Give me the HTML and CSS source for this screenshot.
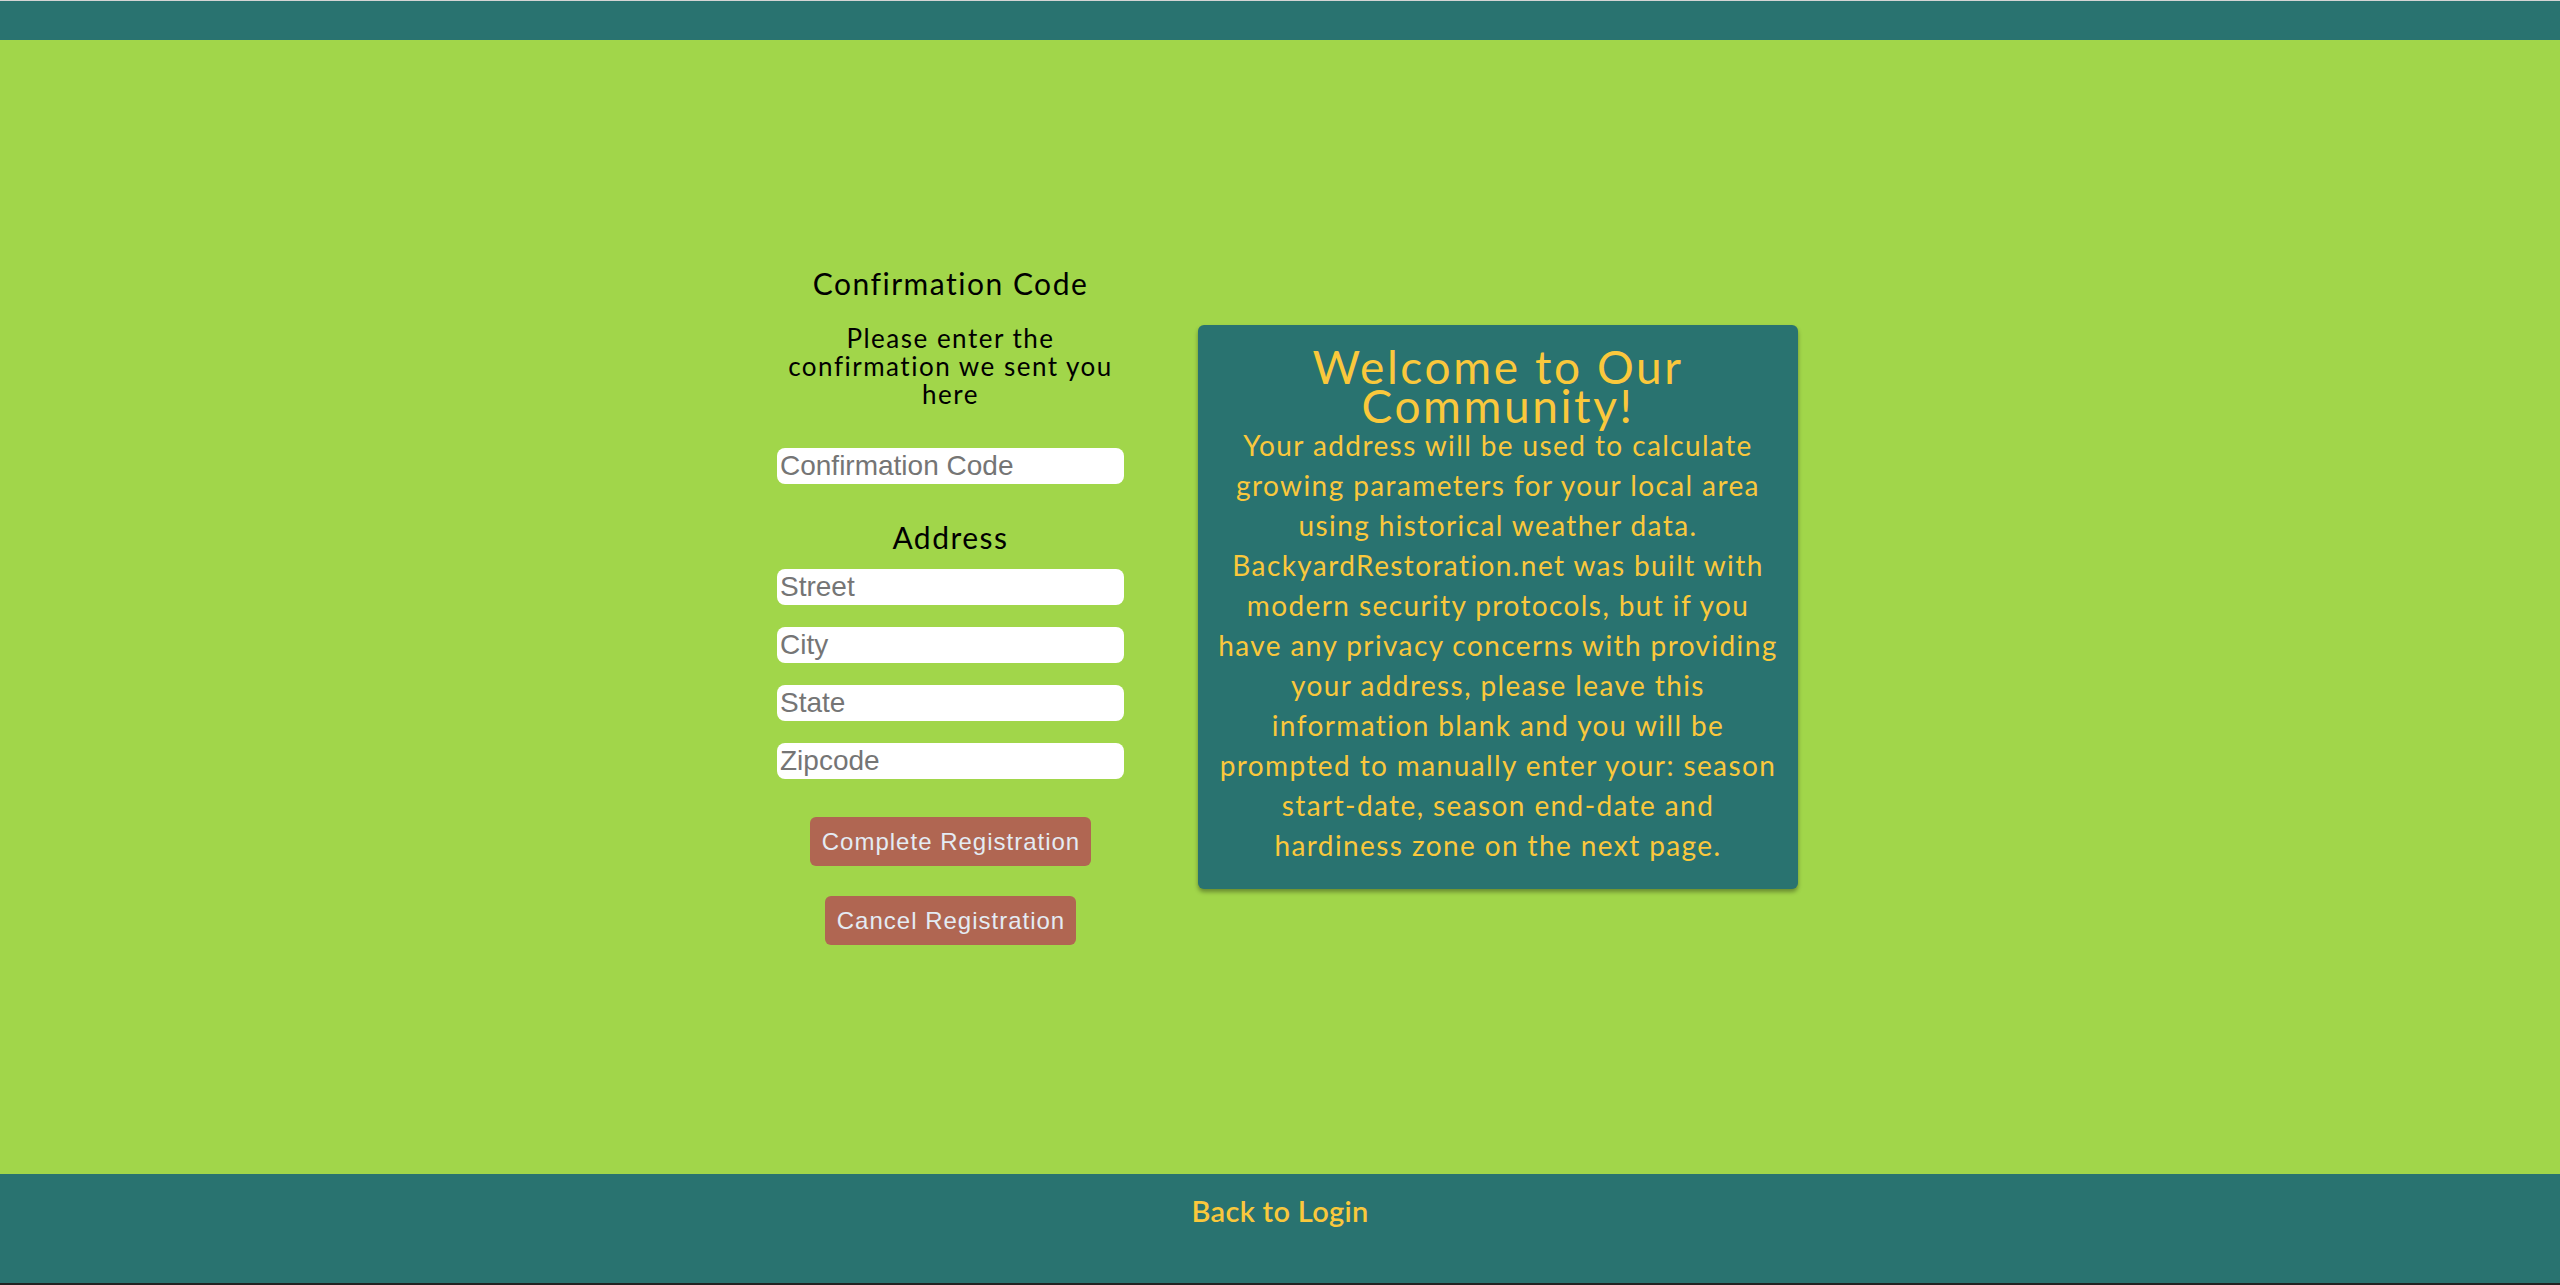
FILE: index.html
```html
<!DOCTYPE html>
<html lang="en">
<head>
<meta charset="utf-8">
<title>Registration - Backyard Restoration</title>
<link rel="stylesheet" href="styles.css">
</head>
<body>
<header class="topbar"></header>
<main class="main">
  <div class="layout">
    <form class="form-col">
      <h2 class="form-heading">Confirmation Code</h2>
      <p class="form-note">Please enter the confirmation we sent you here</p>
      <input class="field field-code" type="text" placeholder="Confirmation Code">
      <h2 class="form-heading address-heading">Address</h2>
      <div class="address-fields">
        <input class="field" type="text" placeholder="Street">
        <input class="field" type="text" placeholder="City">
        <input class="field" type="text" placeholder="State">
        <input class="field" type="text" placeholder="Zipcode">
      </div>
      <div class="actions">
        <button class="btn" type="button">Complete Registration</button>
        <button class="btn" type="button">Cancel Registration</button>
      </div>
    </form>
    <section class="welcome-card">
      <h1 class="welcome-title">Welcome to Our Community!</h1>
      <p class="welcome-text">Your address will be used to calculate growing parameters for your local area using historical weather data. BackyardRestoration.net was built with modern security protocols, but if you have any privacy concerns with providing your address, please leave this information blank and you will be prompted to manually enter your: season start-date, season end-date and hardiness zone on the next page.</p>
    </section>
  </div>
</main>
<footer class="footer">
  <a class="footer-link" href="#">Back to Login</a>
</footer>
</body>
</html>
```
FILE: styles.css
```css
* { box-sizing: border-box; }

html, body {
  margin: 0;
  padding: 0;
}

body {
  min-height: 100vh;
  display: flex;
  flex-direction: column;
  background: #a1d64a;
  font-family: Lato, "Open Sans", sans-serif;
}

.topbar {
  height: 40px;
  background: #297370;
  border-top: 1px solid #d4d4d4;
  flex: none;
}

.main {
  flex: 1;
  display: flex;
  align-items: center;
  justify-content: center;
}

.layout {
  display: flex;
  align-items: center;
  gap: 74px;
  padding-left: 15px;
}

.form-col {
  width: 347px;
  display: flex;
  flex-direction: column;
  align-items: center;
  margin: 0 0 4px;
}

.form-heading {
  margin: 0;
  font-size: 30px;
  line-height: 36px;
  font-weight: 400;
  letter-spacing: 1.5px;
  color: #000;
  text-align: center;
}

.form-note {
  margin: 23px 0 0;
  max-width: 340px;
  font-size: 26px;
  line-height: 28px;
  letter-spacing: 1.5px;
  text-align: center;
  color: #000;
}

.field {
  display: block;
  width: 347px;
  height: 36px;
  border: none;
  border-radius: 8px;
  background: #fff;
  padding: 0 3px;
  font-family: "Liberation Sans", Arial, sans-serif;
  font-size: 28px;
  color: #222;
  outline: none;
}

.field::placeholder {
  color: #757575;
}

.field-code {
  margin-top: 40px;
}

.address-heading {
  margin-top: 35px;
}

.address-fields {
  margin-top: 14px;
  display: flex;
  flex-direction: column;
  gap: 22px;
}

.actions {
  margin-top: 38px;
  display: flex;
  flex-direction: column;
  align-items: center;
  gap: 30px;
}

.btn {
  display: block;
  height: 49px;
  padding: 0 11px 0 12px;
  border: none;
  border-radius: 6px;
  background: #b06652;
  color: #e4ebf3;
  font-family: "Liberation Sans", Arial, sans-serif;
  font-size: 24px;
  letter-spacing: 1px;
  cursor: pointer;
}

.welcome-card {
  width: 600px;
  padding: 22px 20px 24px;
  background: #297370;
  border-radius: 6px;
  box-shadow: 0 3px 4px rgba(0, 0, 0, 0.35);
  text-align: center;
  color: #fac83c;
}

.welcome-title {
  margin: 0;
  font-size: 46px;
  line-height: 39px;
  font-weight: 400;
  letter-spacing: 2.6px;
}

.welcome-text {
  margin: 0;
  font-size: 28px;
  line-height: 40px;
  letter-spacing: 1.4px;
}

.footer {
  flex: none;
  height: 111px;
  background: #297370;
  border-bottom: 2px solid #222;
  text-align: center;
  padding-top: 19px;
}

.footer-link {
  color: #fac83c;
  text-decoration: none;
  font-size: 29px;
  font-weight: 600;
  letter-spacing: 0.3px;
}
```
